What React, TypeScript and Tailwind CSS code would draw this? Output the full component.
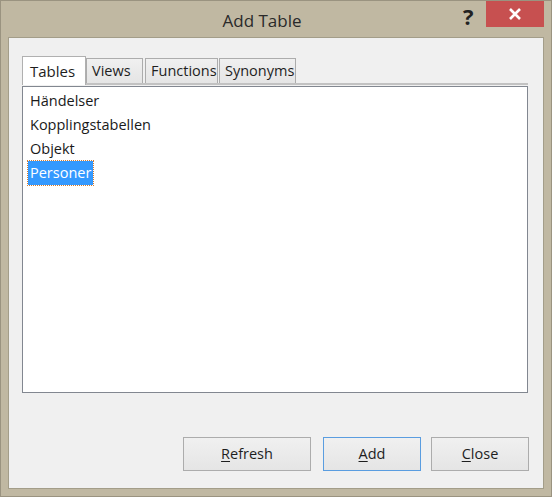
import React from "react"

const items = ["Händelser", "Kopplingstabellen", "Objekt", "Personer"]
const tabs = ["Tables", "Views", "Functions", "Synonyms"]

function Btn({ label, primary, w }: { label: string; primary?: boolean; w: string }) {
  return (
    <button
      className={
        "h-[34px] border bg-gradient-to-b from-[#f0f0f0] to-[#e5e5e5] text-[14.5px] text-[#1e1e1e] " +
        w +
        (primary ? " border-[#5a9de0]" : " border-[#acacac]")
      }
    >
      <span className="underline underline-offset-2">{label[0]}</span>
      {label.slice(1)}
    </button>
  )
}

export default function App() {
  return (
    <div
      className="w-[552px] h-[497px] bg-[#c0b8a2] border border-[#9a9380] flex flex-col"
      style={{ fontFamily: '"Open Sans", "Noto Sans", sans-serif' }}
    >
      {/* title bar */}
      <div className="h-[36px] flex items-start relative">
        <div className="flex-1 text-center text-[17px] text-[#2a2a2a] pt-[7px] pl-[60px]">Add Table</div>
        <div className="w-[22px] text-[22px] font-bold text-[#222] leading-none pt-[4px] mr-[1px]">?</div>
        <div className="w-[58px] h-[26px] bg-[#c75050] flex items-center justify-center mr-[7px]">
          <svg width="14" height="14" viewBox="0 0 14 14">
            <path d="M2 2 L12 12 M12 2 L2 12" stroke="white" strokeWidth="2.6" />
          </svg>
        </div>
      </div>

      {/* client area */}
      <div className="flex-1 mx-[7px] mb-[7px] border border-[#a39d89] bg-[#f0f0f0] flex flex-col pl-[13px] pr-[14px] pt-[19px]">
        <div className="flex items-end h-[28px] border-b-[2px] border-[#c2c2c2] mr-[1px]">
          {tabs.map((t, i) =>
            i === 0 ? (
              <div
                key={t}
                className="h-[29px] w-[64px] bg-white border border-[#b0b0b0] border-b-0 text-[15px] text-[#1e1e1e] pl-[7px] pt-[3px] -mb-[2px] z-10"
              >
                {t}
              </div>
            ) : (
              <div
                key={t}
                className={
                  "h-[25px] bg-gradient-to-b from-[#f0f0f0] to-[#e5e5e5] border border-[#acacac] border-b-0 text-[14.5px] text-[#1e1e1e] pl-[5px] pt-[1px] " +
                  (i === 1 ? "w-[57px]" : i === 2 ? "w-[73px] ml-[2px]" : "w-[77px] ml-[1px]")
                }
              >
                {t}
              </div>
            )
          )}
        </div>
        <div className="mt-[1px] h-[307px] w-[506px] bg-white border border-[#828790] pt-[2px] pl-[5px]">
          {items.map((it, i) => (
            <div key={it} className="h-[24px] flex items-center">
              <span
                className={
                  "text-[14.5px] leading-[24px] px-[2px] " +
                  (i === 3 ? "bg-[#3399ff] text-white outline outline-1 outline-dotted outline-[#d07a30]" : "text-[#1a1a1a]")
                }
              >
                {it}
              </span>
            </div>
          ))}
        </div>
        <div className="flex-1" />
        <div className="flex justify-end pr-[0px] mb-[17px]">
          <Btn label="Refresh" w="w-[128px] mr-[12px]" />
          <Btn label="Add" primary w="w-[98px] mr-[10px]" />
          <Btn label="Close" w="w-[98px]" />
        </div>
      </div>
    </div>
  )
}
